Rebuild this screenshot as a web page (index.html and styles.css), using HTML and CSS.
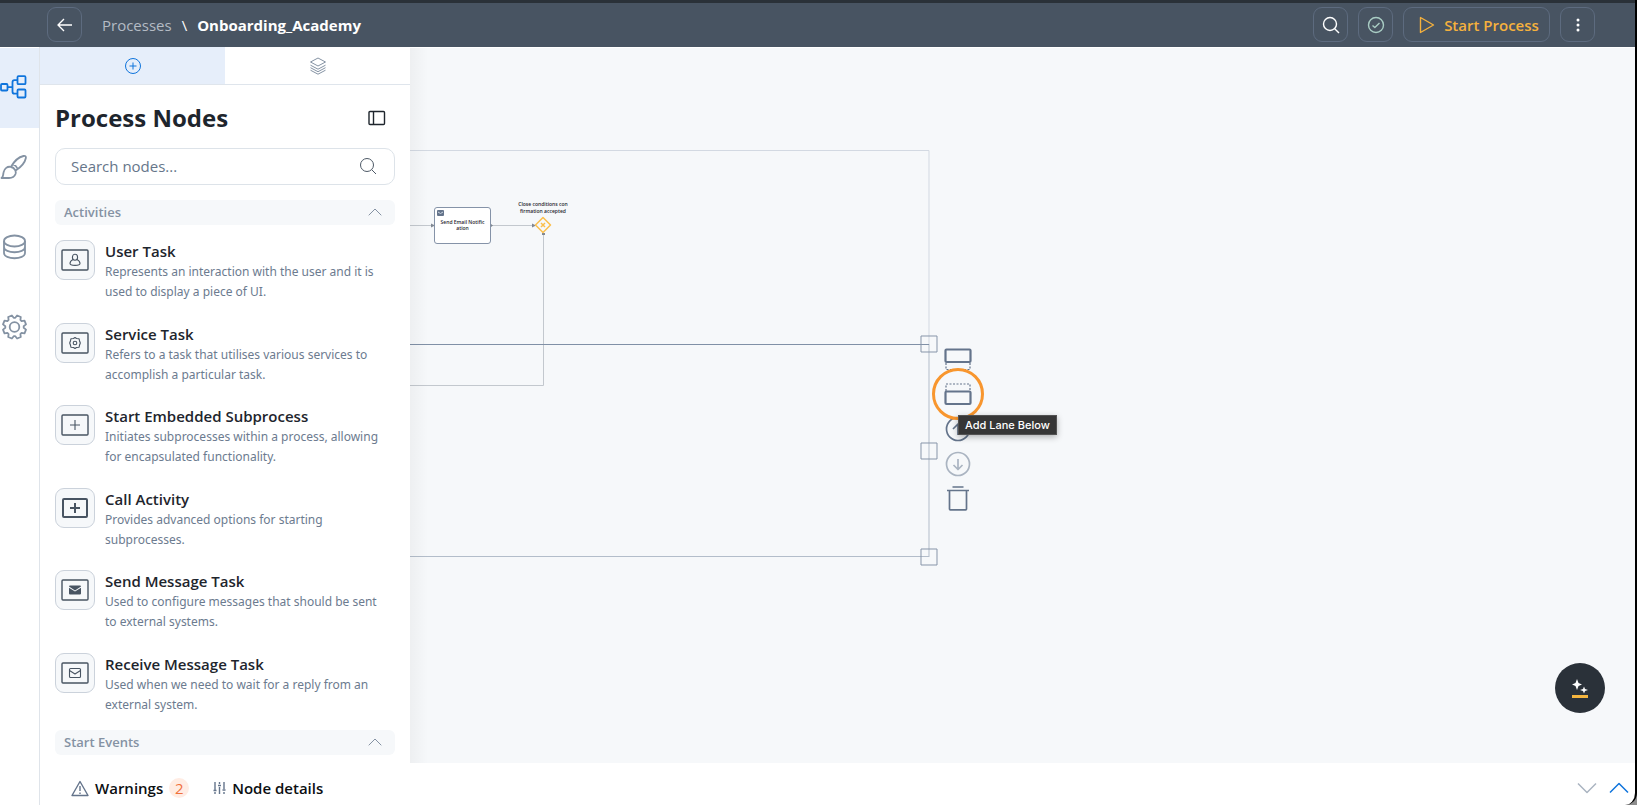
FILE: index.html
```html
<!DOCTYPE html>
<html lang="en">
<head>
    <meta charset="UTF-8">
    <title>Onboarding_Academy</title>
    <link rel="stylesheet" href="styles.css">
</head>
<body>
    <header class="topbar">
        <button class="icon-btn" aria-label="Back">
            <svg width="16" height="14" viewBox="0 0 16 14"><path d="M15 7H1M7 1L1 7l6 6"/></svg>
        </button>
        <nav class="breadcrumb">
            <a href="#">Processes</a>
            <span class="slash">\</span>
            <span class="current">Onboarding_Academy</span>
        </nav>
        <div class="actions">
            <button class="icon-btn" aria-label="Search">
                <svg width="18" height="18" viewBox="0 0 18 18"><circle cx="8" cy="8" r="6.5"/><path d="M12.700 12.700L17 17"/></svg>
            </button>
            <button class="icon-btn valid" aria-label="Validate">
                <svg width="18" height="18" viewBox="0 0 18 18"><circle cx="9" cy="9" r="7.500"/><path d="M5.500 9.500l2.300 2L12.500 7"/></svg>
            </button>
            <button class="start-btn">
                <svg width="16" height="18" viewBox="0 0 16 18"><path d="M1.500 1.500v15L14.500 9z"/></svg>
                Start Process
            </button>
            <button class="icon-btn" aria-label="More">
                <svg class="dots" width="4" height="16" viewBox="0 0 4 16"><circle cx="2" cy="3" r="1.500"/><circle cx="2" cy="8" r="1.500"/><circle cx="2" cy="13" r="1.500"/></svg>
            </button>
        </div>
    </header>

    <div class="workspace">
        <nav class="rail">
            <a class="rail-item active" href="#" aria-label="Process">
                <svg width="27" height="24" viewBox="0 0 27 24"><rect x="1" y="9" width="6.500" height="6.500" rx="1"/><rect x="17.500" y="1.200" width="8" height="8" rx="1"/><rect x="17.500" y="14.500" width="8" height="8" rx="1"/><path d="M7.500 12.200h5M17.500 5.200h-3q-2 0-2 2v9.500q0 2 2 2h3"/></svg>
            </a>
            <a class="rail-item" href="#" aria-label="Design">
                <svg width="27" height="24" viewBox="0 0 27 24"><path d="M1.500 23c2-1.500 1.500-3 2-5.500.7-4 4-6.500 7.500-5.500 3.500.8 5.500 4 4.500 7-1 2.700-3.500 4-6.500 4zM11 11.800C14 6.500 19 2 23.500 1c2-.3 2.700.5 2.300 2.200C25 7 21 12 15.700 15.500M13 9.500c2 .5 3.500 1.700 4.500 4"/></svg>
            </a>
            <a class="rail-item" href="#" aria-label="Data">
                <svg width="27" height="26" viewBox="0 0 27 26"><ellipse cx="14.500" cy="7" rx="10.500" ry="5.500"/><path d="M4 7v12c0 7 21 7 21 0V7M4 13c0 7 21 7 21 0"/></svg>
            </a>
            <a class="rail-item" href="#" aria-label="Settings">
                <svg width="27" height="26" viewBox="0 0 27 26"><g transform="translate(14.500 13)"><circle r="4.800"/><path d="M9.200-.8V.8L11.500 2.600 10 6.300 7.050 5.900 5.900 7.050 6.300 10 2.600 11.500.8 9.200H-.8L-2.600 11.500-6.300 10-5.900 7.050-7.050 5.900-10 6.300-11.500 2.600-9.200.8V-.8L-11.500-2.600-10-6.300-7.050-5.900-5.900-7.050-6.300-10-2.600-11.500-.8-9.200H.8L2.600-11.500 6.300-10 5.900-7.050 7.050-5.900 10-6.300 11.500-2.600z"/></g></svg>
            </a>
        </nav>

        <aside class="panel">
            <div class="tabs">
                <button class="tab selected" aria-label="Nodes">
                    <svg width="18" height="18" viewBox="0 0 18 18"><circle cx="9" cy="9" r="7.500"/><path d="M9 5.500v7M5.500 9h7"/></svg>
                </button>
                <button class="tab" aria-label="Layers">
                    <svg width="18" height="18" viewBox="0 0 18 18"><path d="M9 1l7.500 4L9 9 1.500 5zM1.500 8.200L9 12.200l7.500-4M1.500 10.700L9 14.700l7.500-4M1.500 13.200L9 17.200l7.500-4"/></svg>
                </button>
            </div>
            <div class="panel-head">
                <h1>Process Nodes</h1>
                <button class="collapse" aria-label="Collapse panel">
                    <svg width="18" height="16" viewBox="0 0 18 16"><rect x="1" y="1.500" width="15.500" height="13" rx="1"/><path d="M5.500 1.500v13"/></svg>
                </button>
            </div>
            <div class="search">
                <input type="text" placeholder="Search nodes..." aria-label="Search nodes">
                <svg width="18" height="18" viewBox="0 0 18 18"><circle cx="8" cy="8" r="6.500"/><path d="M12.700 12.700L17 17"/></svg>
            </div>
            <button class="section">
                Activities
                <svg width="14" height="8" viewBox="0 0 14 8"><path d="M.7 7.300L7 1l6.300 6.300"/></svg>
            </button>
            <ul class="nodes">
                <li>
                    <div class="node-icon"><svg width="28" height="22" viewBox="0 0 28 22"><rect x="1" y="1" width="26" height="20" rx="1"/><g class="thin"><ellipse cx="14" cy="8.200" rx="2.600" ry="3"/><path d="M12 10.500c-2 1-3 2.500-3 4 0 2.500 10 2.500 10 0 0-1.500-1-3-3-4"/></g></svg></div>
                    <div><h2>User Task</h2><p>Represents an interaction with the user and it is used to display a piece of UI.</p></div>
                </li>
                <li>
                    <div class="node-icon"><svg width="28" height="22" viewBox="0 0 28 22"><rect x="1" y="1" width="26" height="20" rx="1"/><g class="thin"><circle cx="14" cy="11" r="1.800"/><path d="M12.500 6.500l1.500-1 1.500 1 2.500.2.500 2 .8 2.300-.8 2.300-.5 2-2.500.2-1.500 1-1.500-1-2.500-.2-.5-2-.8-2.300.8-2.300.5-2z"/></g></svg></div>
                    <div><h2>Service Task</h2><p>Refers to a task that utilises various services to accomplish a particular task.</p></div>
                </li>
                <li>
                    <div class="node-icon"><svg width="28" height="22" viewBox="0 0 28 22"><rect x="1" y="1" width="26" height="20" rx="1"/><path class="thin" d="M14 6v10M9 11h10"/></svg></div>
                    <div><h2>Start Embedded Subprocess</h2><p>Initiates subprocesses within a process, allowing for encapsulated functionality.</p></div>
                </li>
                <li>
                    <div class="node-icon"><svg class="bold" width="28" height="22" viewBox="0 0 28 22"><rect x="2" y="2" width="24" height="18" rx="1"/><path d="M14 6v10M9 11h10"/></svg></div>
                    <div><h2>Call Activity</h2><p>Provides advanced options for starting subprocesses.</p></div>
                </li>
                <li>
                    <div class="node-icon"><svg width="28" height="22" viewBox="0 0 28 22"><rect x="1" y="1" width="26" height="20" rx="1"/><path class="solid" d="M9 6.500h10q1 0 1 1L14 11.500 8 7.500q0-1 1-1zM8 8.700l6 3.800 6-3.800v5.800q0 1-1 1H9q-1 0-1-1z"/></svg></div>
                    <div><h2>Send Message Task</h2><p>Used to configure messages that should be sent to external systems.</p></div>
                </li>
                <li>
                    <div class="node-icon"><svg width="28" height="22" viewBox="0 0 28 22"><rect x="1" y="1" width="26" height="20" rx="1"/><g class="thin"><rect x="8.500" y="6.500" width="11" height="9" rx="1"/><path d="M8.500 8.500L14 12l5.500-3.500"/></g></svg></div>
                    <div><h2>Receive Message Task</h2><p>Used when we need to wait for a reply from an external system.</p></div>
                </li>
            </ul>
            <button class="section">
                Start Events
                <svg width="14" height="8" viewBox="0 0 14 8"><path d="M.7 7.300L7 1l6.300 6.300"/></svg>
            </button>
        </aside>

        <main class="canvas">
            <svg class="wires" width="560" height="540" viewBox="0 0 560 540">
                <path class="lane" d="M0 102.500H519v194"/>
                <path class="flow" d="M0 177.500h22M82 177.500h40M133.500 186v151.500H0"/>
                <path class="arrow" d="M21 175.500l4 2-4 2zM122 175.500l4 2-4 2zM81 176v3l2-1.500zM132 185h3v2h-3z"/>
                <path class="lane-edge" d="M519 296v213"/>
                <path class="lane-top" d="M0 296.500h519"/>
                <path class="lane-bottom" d="M0 508.500h519"/>
                <g class="handles"><rect x="511" y="288" width="16" height="16"/><rect x="511" y="395" width="16" height="16"/><rect x="511" y="501" width="16" height="16"/></g>
                <g class="gateway"><path d="M133 169.500l7.500 7.500-7.500 7.500-7.500-7.500z"/><path d="M131 175l4 4M135 175l-4 4"/></g>
            </svg>
            <div class="task">
                <svg width="7" height="6" viewBox="0 0 7 6"><rect width="7" height="6" rx="1" fill="#64748b"/><path d="M1 2l2.500 1.500L6 2" fill="none" stroke="#cbd5e1"/></svg>
                <span>Send Email Notific<br>ation</span>
            </div>
            <div class="gateway-label">Close conditions con<br>firmation accepted</div>

            <div class="lane-tools">
                <button aria-label="Add Lane Above"><svg width="28" height="26" viewBox="0 0 28 26"><rect x="1.500" y="3.500" width="25" height="12.500" rx="1"/><path class="dash" d="M2 17v6.500h24V17"/></svg></button>
                <button class="ringed" aria-label="Add Lane Below"><svg width="28" height="26" viewBox="0 0 28 26"><path class="dash" d="M2 10V3h24v7"/><rect x="1.500" y="10.500" width="25" height="12.500" rx="1"/></svg></button>
                <button aria-label="Move Up"><svg width="28" height="26" viewBox="0 0 28 26"><circle cx="14" cy="13" r="11.500"/><path d="M14 19V8M9 13l5-5 5 5"/></svg></button>
                <button aria-label="Move Down" disabled><svg width="28" height="26" viewBox="0 0 28 26"><circle cx="14" cy="13" r="11.500"/><path d="M14 8v10M9.500 14l4.500 4.500 4.500-4.500"/></svg></button>
                <button aria-label="Delete"><svg width="28" height="26" viewBox="0 0 28 26"><path d="M8.500 1h11M3 4.500h22M5.500 4.500v18.500q0 .8.800.8h15.400q.8 0 .8-.8V4.500"/></svg></button>
            </div>
            <div class="tooltip" role="tooltip">Add Lane Below</div>

            <button class="assistant" aria-label="Assistant">
                <svg width="20" height="22" viewBox="0 0 20 22"><path fill="#fff" d="M7 2l1.500 4L12 7.500 8.500 9 7 13 5.500 9 2 7.500 5.500 6zM14 9.500l1 2.500 3 1-3 1-1 2.500-1-2.500-3-1 3-1z"/><path fill="#f5b53f" d="M2 18h16v3H2z"/></svg>
            </button>
        </main>
    </div>

    <footer class="bottombar">
        <button class="drawer-tab">
            <svg width="18" height="17" viewBox="0 0 18 17"><path d="M9 1.500L17 15.500H1zM9 6v5M9 12.500v1.500"/></svg>
            Warnings
            <span class="count">2</span>
        </button>
        <button class="drawer-tab">
            <svg width="13" height="14" viewBox="0 0 13 14"><path d="M2 1v8M2 11v2M6.500 1v2M6.500 6v7M11 1v7M11 11v2M.5 9.500h3M5 4.500h3M9.500 9h3"/></svg>
            Node details
        </button>
        <div class="steps">
            <button aria-label="Collapse"><svg width="20" height="12" viewBox="0 0 20 12"><path d="M1 1.500l9 9 9-9"/></svg></button>
            <button class="up" aria-label="Expand"><svg width="20" height="12" viewBox="0 0 20 12"><path d="M1 10.500l9-9 9 9"/></svg></button>
        </div>
    </footer>
</body>
</html>
```
FILE: styles.css
```css
* {
    box-sizing: border-box;
}
html {
    background: #8d8d8d;
}
body {
    margin: 0;
    height: 100vh;
    display: flex;
    flex-direction: column;
    overflow: hidden;
    font-family: "Open Sans", sans-serif;
    color: #1e252d;
    background: #fff;
    border-right: 2px solid #000;
    border-bottom-right-radius: 12px;
}
button {
    font: inherit;
    color: inherit;
    background: none;
    border: 0;
    padding: 0;
    display: flex;
    align-items: center;
    cursor: pointer;
}
svg {
    display: block;
    flex: none;
    fill: none;
    stroke: currentColor;
    stroke-linejoin: round;
}

/* top bar */
.topbar {
    flex: none;
    height: 47px;
    display: flex;
    align-items: center;
    padding: 0 40px 1px 47px;
    border-top: 3px solid #2a3138;
    background: #485462;
    color: #fff;
}
.icon-btn,
.start-btn {
    height: 35px;
    border: 1px solid #5d6b7f;
    border-radius: 9px;
    justify-content: center;
}
.icon-btn {
    width: 35px;
}
.icon-btn svg,
.start-btn svg {
    stroke-width: 1.4;
}
.icon-btn .dots {
    fill: #fff;
    stroke: none;
}
.valid {
    color: #a9cdc4;
}
.start-btn {
    width: 147px;
    gap: 9px;
    padding-left: 5px;
    color: #f5b13d;
    font-size: 15px;
    font-weight: 600;
}
.breadcrumb {
    display: flex;
    gap: 10px;
    margin-left: 20px;
    font-size: 15px;
}
.breadcrumb a {
    color: #b4bbc4;
    text-decoration: none;
}
.current {
    font-weight: 700;
}
.actions {
    display: flex;
    gap: 10px;
    margin-left: auto;
}

/* workspace */
.workspace {
    flex: 1;
    min-height: 0;
    display: grid;
    grid-template-columns: 40px 370px 1fr;
    grid-template-rows: minmax(0, 1fr);
}
.rail {
    padding-top: 1px;
    border-right: 1px solid #dfe4ea;
}
.rail-item {
    display: flex;
    align-items: center;
    height: 80px;
    padding-bottom: 2px;
    color: #8492a3;
}
.rail-item svg {
    stroke-width: 1.8;
}
.rail-item.active {
    color: #0f74dc;
    background: #e6eefa;
}
.panel {
    position: relative;
    z-index: 1;
    display: flex;
    flex-direction: column;
    overflow: hidden;
    padding-bottom: 8px;
    background: #fff;
}
.tabs {
    flex: none;
    display: grid;
    grid-template-columns: 1fr 1fr;
    height: 38px;
    border-bottom: 1px solid #dfe5ec;
}
.tab {
    justify-content: center;
    color: #8492a3;
}
.tab.selected {
    color: #0f74dc;
    background: #e6eefa;
}
.panel-head {
    flex: none;
    display: flex;
    align-items: center;
    justify-content: space-between;
    height: 63px;
    padding: 2px 24px 0 15px;
}
h1 {
    margin: 0;
    font-size: 24px;
    line-height: 32px;
    font-weight: 700;
}
.collapse svg {
    stroke-width: 1.4;
}
.search {
    flex: none;
    display: flex;
    align-items: center;
    height: 37px;
    margin: 0 15px;
    padding: 0 17px 2px 15px;
    border: 1px solid #dde3e9;
    border-radius: 10px;
    color: #4d5966;
}
.search input {
    flex: 1;
    min-width: 0;
    padding: 0;
    border: 0;
    outline: 0;
    font: inherit;
    font-size: 15px;
}
.search input::placeholder {
    color: #66768a;
    opacity: 1;
}
.section {
    flex: none;
    justify-content: space-between;
    height: 25px;
    margin: 15px 15px 0;
    padding: 0 13px 2px 9px;
    border-radius: 6px;
    background: #f6f8fa;
    color: #8592a3;
    font-size: 13px;
    font-weight: 600;
}
.nodes {
    flex: 1;
    display: flex;
    flex-direction: column;
    justify-content: space-between;
    gap: 20px;
    list-style: none;
    margin: 15px 20px 0 15px;
    padding: 0;
}
.nodes li {
    display: flex;
    gap: 10px;
}
.node-icon {
    display: flex;
    align-items: center;
    justify-content: center;
    flex: none;
    width: 40px;
    height: 40px;
    border: 1px solid #cbd2db;
    border-radius: 9px;
    background: #f6f8fa;
    color: #485462;
}
.node-icon svg {
    stroke-width: 1.4;
}
.node-icon .thin {
    stroke-width: 1.1;
}
.node-icon .bold {
    stroke-width: 2;
}
.node-icon .solid {
    fill: currentColor;
    stroke: none;
}
h2 {
    margin: 0;
    font-size: 15px;
    line-height: 22px;
    font-weight: 600;
}
p {
    margin: 0;
    font-family: "Noto Sans", sans-serif;
    font-size: 12px;
    line-height: 20px;
    color: #6c7b8f;
}

/* diagram canvas */
.canvas {
    position: relative;
    overflow: hidden;
    margin-top: 1px;
    background: #f6f8fa;
}
.canvas::before {
    content: "";
    position: absolute;
    z-index: 1;
    inset: 0 auto 0 0;
    width: 18px;
    background: linear-gradient(to right, rgba(0, 0, 0, 0.035), transparent);
}
.wires {
    position: absolute;
    top: 0;
    left: 0;
}
.lane {
    stroke: #d3d9e2;
}
.flow {
    stroke: #c3c8ce;
}
.arrow {
    fill: #808893;
    stroke: none;
}
.lane-edge,
.lane-bottom {
    stroke: #b3bdca;
}
.lane-top {
    stroke: #8090a6;
}
.handles {
    stroke: #8795a9;
}
.gateway {
    stroke: #fbbf4c;
    stroke-width: 1.5;
}
.task {
    position: absolute;
    left: 24px;
    top: 159px;
    width: 57px;
    height: 37px;
    border: 1px solid #8593a8;
    border-radius: 3px;
    background: #fff;
    font-size: 5px;
    line-height: 6px;
    text-align: center;
    font-weight: 600;
}
.task svg {
    margin: 2px 0 3px 2px;
    stroke: none;
}
.gateway-label {
    position: absolute;
    left: 103px;
    top: 153px;
    width: 60px;
    font-size: 5px;
    line-height: 7px;
    text-align: center;
    font-weight: 600;
}
.lane-tools {
    position: absolute;
    left: 534px;
    top: 298px;
    display: grid;
    gap: 9px;
    color: #64748b;
}
.lane-tools svg {
    stroke-width: 1.7;
}
.lane-tools rect {
    stroke-width: 2.2;
}
.lane-tools .dash {
    stroke-width: 1.2;
    stroke-dasharray: 2 1.500;
}
.lane-tools button:disabled {
    color: #aab4c1;
}
.ringed {
    position: relative;
}
.ringed::after {
    content: "";
    position: absolute;
    inset: -13px -12px;
    border: 3px solid #f8962e;
    border-radius: 50%;
}
.tooltip {
    position: absolute;
    left: 548px;
    top: 367px;
    padding: 0 6px;
    border: 1px solid #525252;
    background: #363636;
    color: #fff;
    box-shadow: 0 2px 6px rgba(0, 0, 0, 0.3);
    font-family: Inter, sans-serif;
    font-size: 11px;
    line-height: 18px;
    font-weight: 500;
}
.assistant {
    position: absolute;
    right: 30px;
    bottom: 50px;
    width: 50px;
    height: 50px;
    justify-content: center;
    border-radius: 50%;
    background: #2a3139;
}
.assistant svg {
    stroke: none;
}

/* bottom drawer */
.bottombar {
    flex: none;
    display: flex;
    align-items: center;
    height: 42px;
    padding: 8px 6px 0 31px;
    margin-left: 39px;
    border-left: 1px solid #dfe4ea;
    color: #0c0f12;
    font-size: 15px;
    font-weight: 600;
}
.drawer-tab {
    gap: 6px;
    margin-right: 24px;
}
.drawer-tab svg {
    color: #64748b;
    stroke-width: 1.4;
}
.count {
    width: 20px;
    border-radius: 10px;
    background: #ffece3;
    color: #f0703c;
    line-height: 20px;
    text-align: center;
    font-weight: 400;
}
.steps {
    display: flex;
    gap: 12px;
    margin-left: auto;
    color: #aab4c1;
}
.steps svg {
    stroke-width: 1.5;
}
.steps .up {
    color: #0f74dc;
}
```
